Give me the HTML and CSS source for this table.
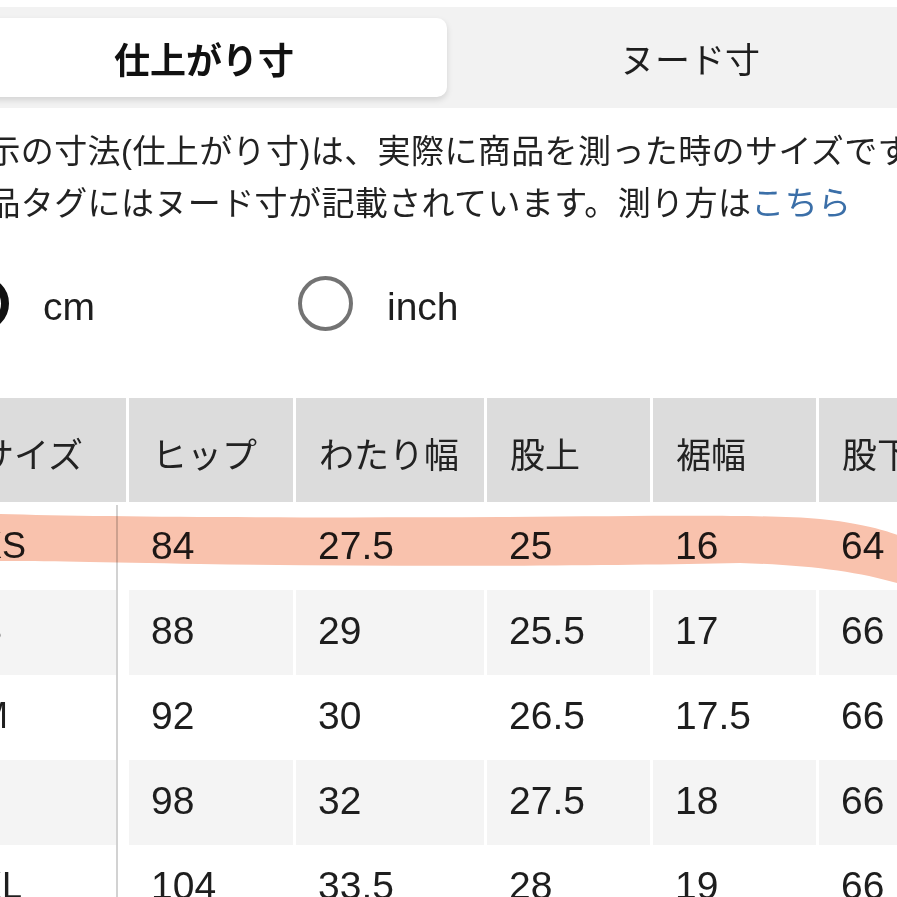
FILE: index.html
```html
<!DOCTYPE html>
<html lang="ja">
<head>
<meta charset="utf-8">
<title>サイズチャート</title>
<link rel="stylesheet" href="styles.css">
</head>
<body>
<div class="page">
  <div class="seg">
    <div class="tab active">仕上がり寸</div>
    <div class="tab">ヌード寸</div>
  </div>

  <p class="note">
    <span class="line">表示の寸法(仕上がり寸)は、実際に商品を測った時のサイズです。</span>
    <span class="line">商品タグにはヌード寸が記載されています。測り方は<a class="link">こちら</a></span>
  </p>

  <div class="units">
    <div class="unit"><span class="radio checked"></span><span class="unit-label">cm</span></div>
    <div class="unit"><span class="radio"></span><span class="unit-label">inch</span></div>
  </div>

  <div class="chart">
    <div class="row head">
      <div class="cell size">サイズ</div>
      <div class="cell">ヒップ</div>
      <div class="cell">わたり幅</div>
      <div class="cell">股上</div>
      <div class="cell">裾幅</div>
      <div class="cell">股下</div>
    </div>
    <div class="row body">
      <div class="cell size">XS</div>
      <div class="cell">84</div>
      <div class="cell">27.5</div>
      <div class="cell">25</div>
      <div class="cell">16</div>
      <div class="cell">64</div>
    </div>
    <div class="row body alt">
      <div class="cell size">S</div>
      <div class="cell">88</div>
      <div class="cell">29</div>
      <div class="cell">25.5</div>
      <div class="cell">17</div>
      <div class="cell">66</div>
    </div>
    <div class="row body">
      <div class="cell size">M</div>
      <div class="cell">92</div>
      <div class="cell">30</div>
      <div class="cell">26.5</div>
      <div class="cell">17.5</div>
      <div class="cell">66</div>
    </div>
    <div class="row body alt">
      <div class="cell size">L</div>
      <div class="cell">98</div>
      <div class="cell">32</div>
      <div class="cell">27.5</div>
      <div class="cell">18</div>
      <div class="cell">66</div>
    </div>
    <div class="row body">
      <div class="cell size">XL</div>
      <div class="cell">104</div>
      <div class="cell">33.5</div>
      <div class="cell">28</div>
      <div class="cell">19</div>
      <div class="cell">66</div>
    </div>

    <svg class="marker" viewBox="0 0 900 100" width="900" height="100" aria-hidden="true">
      <path d="M0,16 C100,19 300,20 500,19 C650,18 760,16 820,21 C860,25 885,32 900,38 L900,86 C860,74 810,67 740,65 C600,68 400,69 200,66 C100,64 40,63 0,63 Z" fill="#f9c2ad"/>
    </svg>
  </div>
</div>
</body>
</html>
```

FILE: styles.css
```css
html, body {
  margin: 0;
  padding: 0;
  overflow: hidden;
  background: #ffffff;
}

body {
  font-family: "Liberation Sans", "Noto Sans CJK JP", sans-serif;
  color: #1e1e1e;
}

.page {
  margin-left: -46px;
  width: 1030px;
  padding-top: 7px;
}

/* segmented control */
.seg {
  display: grid;
  grid-template-columns: 486px 486px;
  padding: 11px 7px;
  background: #f2f2f2;
  width: max-content;
}

.tab {
  height: 79px;
  display: flex;
  align-items: center;
  justify-content: center;
  font-size: 35px;
  color: #1e1e1e;
}

.tab.active {
  background: #ffffff;
  border-radius: 10px;
  box-shadow: 0 3px 6px rgba(0, 0, 0, 0.13);
  font-weight: 700;
  font-size: 36px;
  color: #111;
}

/* note */
.note {
  margin: 18px 0 0;
  font-size: 33px;
  line-height: 52px;
  letter-spacing: 0.4px;
  white-space: nowrap;
  color: #222;
}

.note .line {
  display: block;
}

.link {
  color: #3b6fa8;
}

/* unit radios */
.units {
  display: grid;
  grid-template-columns: 344px auto;
  margin-top: 46px;
  height: 55px;
  align-items: center;
}

.unit {
  display: flex;
  align-items: center;
  gap: 34px;
}

.radio {
  width: 55px;
  height: 55px;
  border-radius: 50%;
  box-sizing: border-box;
  border: 4px solid #737373;
  flex: none;
}

.radio.checked {
  border: 8px solid #111;
}

.unit-label {
  font-size: 39px;
  line-height: 1;
  padding-top: 6px;
  color: #1e1e1e;
}

/* size chart */
.chart {
  position: relative;
  margin-top: 67px;
}

.row {
  display: grid;
  grid-template-columns: 172px 164px 188px 163px 163px 163px;
  column-gap: 3px;
  height: 85px;
}

.row.head {
  height: 104px;
  margin-bottom: 3px;
}

.cell {
  display: flex;
  align-items: center;
  padding-left: 22px;
  font-size: 39px;
  color: #1e1e1e;
  white-space: nowrap;
}

.body .cell {
  padding-bottom: 4px;
}

.head .cell {
  background: #dcdcdc;
  font-size: 35px;
  color: #222;
  padding-top: 5px;
  padding-left: 23px;
}

.head .size {
  padding-left: 25px;
}

.row.alt .cell {
  background: #f4f4f4;
}

.body .size {
  margin-right: 8px;
  border-right: 2px solid #d2d2d2;
  padding-left: 24px;
  font-size: 36px;
}

.marker {
  position: absolute;
  left: 46px;
  top: 100px;
  pointer-events: none;
  mix-blend-mode: multiply;
}
```
